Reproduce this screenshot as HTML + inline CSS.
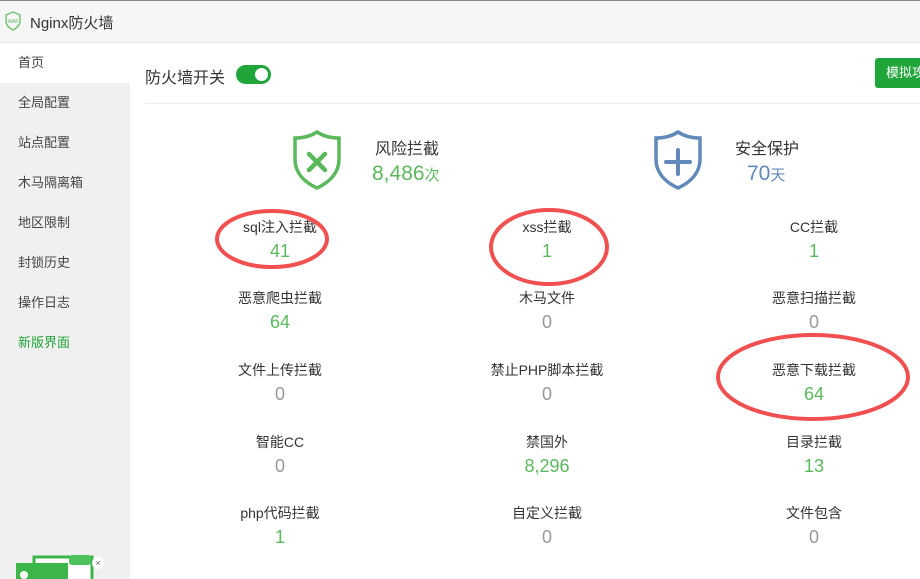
<!DOCTYPE html>
<html><head><meta charset="utf-8"><style>
*{margin:0;padding:0;box-sizing:border-box}
body{width:920px;height:579px;overflow:hidden;font-family:"Liberation Sans","Noto Sans CJK SC",sans-serif;background:#fff;position:relative;color:#333}
.top{position:absolute;left:0;top:0;width:920px;height:43px;background:#f6f6f6;border-top:1px solid #888;border-bottom:1px solid #e6e6e6}
.top .t{position:absolute;left:30px;top:11px;font-size:15px;color:#333}
.side{position:absolute;left:0;top:43px;width:130px;height:536px;background:#f0f0f0}
.side div{height:40px;line-height:40px;padding-left:18px;font-size:13px;color:#444}
.side .a{background:#fff}
.side .g{color:#20a53a}
.abs{position:absolute}
.stat{position:absolute;width:200px;text-align:center}
.stat .l{font-size:14px;color:#333;height:24px}
.stat .v{font-size:18px}
.gr{color:#5cb85c}.gy{color:#999}
</style></head><body>
<div class="top">
<svg class="abs" style="left:4px;top:10px" width="18" height="20" viewBox="0 0 18 20"><path d="M9 1 L16 4 V10 C16 14 13 17 9 19 C5 17 2 14 2 10 V4 Z" fill="none" stroke="#5cb85c" stroke-width="1.2"/><text x="9" y="12" font-size="5" text-anchor="middle" fill="#5cb85c" font-family="Liberation Sans">WAF</text></svg>
<div class="t">Nginx防火墙</div></div>
<div class="side">
<div class="a">首页</div><div>全局配置</div><div>站点配置</div><div>木马隔离箱</div><div>地区限制</div><div>封锁历史</div><div>操作日志</div><div class="g">新版界面</div>
</div>
<svg class="abs" style="left:14px;top:553px" width="92" height="26"><rect x="20" y="4" width="58" height="26" fill="#fff" stroke="#3cb64a" stroke-width="3"/><rect x="55" y="2" width="22" height="10" rx="3" fill="#4cc35a"/><rect x="2" y="10" width="52" height="20" fill="#3cb64a"/><circle cx="10" cy="22" r="4" fill="#fff"/><circle cx="84" cy="10" r="6" fill="#fff"/><text x="84" y="13" font-size="9" text-anchor="middle" fill="#666">×</text></svg>
<div class="abs" style="left:145px;top:64px;font-size:16px;color:#333">防火墙开关</div>
<div class="abs" style="left:236px;top:65px;width:35px;height:19px;border-radius:10px;background:#20a53a"><div style="position:absolute;right:3px;top:3px;width:13px;height:13px;border-radius:50%;background:#fff"></div></div>
<div class="abs" style="left:875px;top:58px;width:60px;height:30px;border-radius:3px;background:#20a53a;color:#fff;font-size:13px;line-height:30px;padding-left:11px">模拟攻击</div>
<div class="abs" style="left:145px;top:103px;width:775px;height:1px;background:#eee"></div>
<svg class="abs" style="left:290px;top:129px" width="54" height="62" viewBox="0 0 54 62"><path d="M27 3 C21 7 13 9 5 9 V30 C5 45 16 54 27 59 C38 54 49 45 49 30 V9 C41 9 33 7 27 3 Z" fill="none" stroke="#5cb85c" stroke-width="3.5"/><path d="M19 25 L35 41 M35 25 L19 41" stroke="#5cb85c" stroke-width="4.5" stroke-linecap="round"/></svg>
<div class="abs" style="left:375px;top:135px;font-size:16px">风险拦截</div>
<div class="abs" style="left:372px;top:162px;font-size:21px;color:#5cb85c">8,486<span style="font-size:15px">次</span></div>
<svg class="abs" style="left:651px;top:129px" width="54" height="62" viewBox="0 0 54 62"><path d="M27 3 C21 7 13 9 5 9 V30 C5 45 16 54 27 59 C38 54 49 45 49 30 V9 C41 9 33 7 27 3 Z" fill="none" stroke="#6189b9" stroke-width="3.5"/><path d="M27 21 V45 M15 33 H39" stroke="#6189b9" stroke-width="4" stroke-linecap="round"/></svg>
<div class="abs" style="left:735px;top:135px;font-size:16px">安全保护</div>
<div class="abs" style="left:747px;top:162px;font-size:21px;color:#6189b9">70<span style="font-size:15px">天</span></div>

<div class="stat" style="left:180px;top:217px"><div class="l">sql注入拦截</div><div class="v gr">41</div></div>
<div class="stat" style="left:447px;top:217px"><div class="l">xss拦截</div><div class="v gr">1</div></div>
<div class="stat" style="left:714px;top:217px"><div class="l">CC拦截</div><div class="v gr">1</div></div>
<div class="stat" style="left:180px;top:288px"><div class="l">恶意爬虫拦截</div><div class="v gr">64</div></div>
<div class="stat" style="left:447px;top:288px"><div class="l">木马文件</div><div class="v gy">0</div></div>
<div class="stat" style="left:714px;top:288px"><div class="l">恶意扫描拦截</div><div class="v gy">0</div></div>
<div class="stat" style="left:180px;top:360px"><div class="l">文件上传拦截</div><div class="v gy">0</div></div>
<div class="stat" style="left:447px;top:360px"><div class="l">禁止PHP脚本拦截</div><div class="v gy">0</div></div>
<div class="stat" style="left:714px;top:360px"><div class="l">恶意下载拦截</div><div class="v gr">64</div></div>
<div class="stat" style="left:180px;top:432px"><div class="l">智能CC</div><div class="v gy">0</div></div>
<div class="stat" style="left:447px;top:432px"><div class="l">禁国外</div><div class="v gr">8,296</div></div>
<div class="stat" style="left:714px;top:432px"><div class="l">目录拦截</div><div class="v gr">13</div></div>
<div class="stat" style="left:180px;top:503px"><div class="l">php代码拦截</div><div class="v gr">1</div></div>
<div class="stat" style="left:447px;top:503px"><div class="l">自定义拦截</div><div class="v gy">0</div></div>
<div class="stat" style="left:714px;top:503px"><div class="l">文件包含</div><div class="v gy">0</div></div>

<svg class="abs" style="left:0;top:0" width="920" height="579"><g fill="none" stroke="#f05050" stroke-width="4"><ellipse cx="272" cy="239" rx="55" ry="28"/><ellipse cx="549" cy="247" rx="58" ry="37"/><ellipse cx="813" cy="377" rx="95" ry="42"/></g></svg>
</body></html>
